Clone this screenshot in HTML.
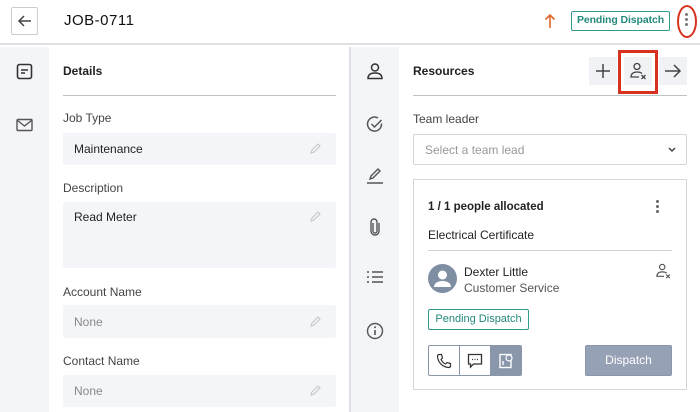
<!DOCTYPE html>
<html><head><meta charset="utf-8"><style>
*{box-sizing:border-box;margin:0;padding:0}
body{width:700px;height:412px;overflow:hidden;background:#fff;font-family:"Liberation Sans",sans-serif;color:#222;position:relative;font-size:12px}
.a{position:absolute}
.lbl{color:#444;font-size:12px}
.box{background:#f4f5f8;border-radius:2px}
.val{position:absolute;left:11px;font-size:12px}
.pen{position:absolute;right:14px}
</style></head><body>
<svg width="0" height="0" style="position:absolute"><defs><symbol id="pen" viewBox="0 0 14 14"><path d="M3 11l1-3 6-6 2 2-6 6z" fill="none" stroke="#c4c6ca" stroke-width="1.1"/></symbol></defs></svg>
<!-- header -->
<div class="a" style="left:0;top:0;width:700px;height:45px;border-bottom:2px solid #dfe0e3"></div>
<div class="a" style="left:11px;top:7px;width:27px;height:28px;border:1px solid #c9ccd2;border-radius:2px"></div>
<svg class="a" style="left:16px;top:13px" width="18" height="16" viewBox="0 0 18 16"><path d="M15 8H3M8 3L3 8l5 5" fill="none" stroke="#444" stroke-width="1.5"/></svg>
<div class="a" style="left:64px;top:12px;font-size:15px;letter-spacing:0.5px;color:#111">JOB-0711</div>
<svg class="a" style="left:544px;top:13px" width="12" height="16" viewBox="0 0 12 16"><path d="M6 15V2M1.5 6.5L6 2l4.5 4.5" fill="none" stroke="#e0672d" stroke-width="1.6"/></svg>
<div class="a" style="left:571px;top:11px;width:99px;height:20px;border:1.5px solid #2e9a8c;border-radius:2px;color:#23897c;font-size:10.5px;font-weight:bold;text-align:center;line-height:17px;white-space:nowrap;letter-spacing:-0.1px">Pending Dispatch</div>
<div class="a" style="left:677px;top:5px;width:20px;height:33px;border:2.5px solid #d8321e;border-radius:50%"></div>
<div class="a" style="left:685px;top:13px;width:3px;height:3px;background:#777;border-radius:50%;box-shadow:0 5px 0 #777,0 10px 0 #777"></div>
<!-- left rail -->
<div class="a" style="left:0;top:47px;width:49px;height:365px;background:#f4f5f8"></div>
<svg class="a" style="left:16px;top:63px" width="17" height="17" viewBox="0 0 17 17"><rect x="1.5" y="1.5" width="14" height="14" rx="2" fill="none" stroke="#333" stroke-width="1.6"/><path d="M5 7h7M5 10h4" stroke="#333" stroke-width="1.4"/></svg>
<svg class="a" style="left:16px;top:118px" width="17" height="14" viewBox="0 0 17 14"><rect x="1" y="1.5" width="15" height="11" rx="1" fill="none" stroke="#555" stroke-width="1.4"/><path d="M1.5 2.5L8.5 8l7-5.5" fill="none" stroke="#555" stroke-width="1.4"/></svg>
<!-- details -->
<div class="a" style="left:63px;top:64px;font-size:12px;font-weight:bold;color:#222">Details</div>
<div class="a" style="left:63px;top:95px;width:273px;height:1px;background:#bfc2c7"></div>
<div class="a lbl" style="left:63px;top:111px">Job Type</div>
<div class="a box" style="left:63px;top:133px;width:273px;height:32px"><span class="val" style="top:9px">Maintenance</span><svg class="pen" style="top:9px" width="14" height="14"><use href="#pen"/></svg></div>
<div class="a lbl" style="left:63px;top:181px">Description</div>
<div class="a box" style="left:63px;top:202px;width:273px;height:66px"><span class="val" style="top:8px">Read Meter</span><svg class="pen" style="top:8px" width="14" height="14"><use href="#pen"/></svg></div>
<div class="a lbl" style="left:63px;top:285px">Account Name</div>
<div class="a box" style="left:63px;top:305px;width:273px;height:33px"><span class="val" style="top:10px;color:#888">None</span><svg class="pen" style="top:10px" width="14" height="14"><use href="#pen"/></svg></div>
<div class="a lbl" style="left:63px;top:354px">Contact Name</div>
<div class="a box" style="left:63px;top:375px;width:273px;height:32px"><span class="val" style="top:9px;color:#888">None</span><svg class="pen" style="top:9px" width="14" height="14"><use href="#pen"/></svg></div>
<!-- divider + right rail -->
<div class="a" style="left:349px;top:47px;width:2px;height:365px;background:#dfe0e3"></div>
<div class="a" style="left:351px;top:47px;width:48px;height:365px;background:#f4f5f8"></div>
<svg class="a" style="left:366px;top:62px" width="18" height="18" viewBox="0 0 18 18"><circle cx="9" cy="5.5" r="3.5" fill="none" stroke="#333" stroke-width="1.5"/><path d="M2 16.5c0-4 3-5.5 7-5.5s7 1.5 7 5.5z" fill="none" stroke="#333" stroke-width="1.5"/></svg>
<svg class="a" style="left:366px;top:115px" width="18" height="18" viewBox="0 0 18 18"><path d="M15.5 8.5A7 7 0 1 1 12 3" fill="none" stroke="#555" stroke-width="1.5"/><path d="M5.5 9l3 3 7-7" fill="none" stroke="#555" stroke-width="1.5"/></svg>
<svg class="a" style="left:366px;top:166px" width="18" height="18" viewBox="0 0 18 18"><path d="M4 13l1-3 7-7 2 2-7 7z" fill="none" stroke="#555" stroke-width="1.4"/><path d="M1 17h16" stroke="#555" stroke-width="1.5"/></svg>
<svg class="a" style="left:369px;top:218px" width="12" height="18" viewBox="0 0 12 18"><path d="M4 5v8a2 2 0 0 0 4 0V4a3 3 0 0 0-6 0v9a4 4 0 0 0 8 0V5" fill="none" stroke="#555" stroke-width="1.4"/></svg>
<svg class="a" style="left:366px;top:270px" width="18" height="14" viewBox="0 0 18 14"><path d="M1 2h2M6 2h11M1 7h2M6 7h11M1 12h2M6 12h11" stroke="#555" stroke-width="1.4"/></svg>
<svg class="a" style="left:366px;top:322px" width="18" height="18" viewBox="0 0 18 18"><circle cx="9" cy="9" r="7.5" fill="none" stroke="#555" stroke-width="1.4"/><path d="M9 8v5" stroke="#555" stroke-width="1.6"/><circle cx="9" cy="5.3" r="1" fill="#555"/></svg>
<!-- resources -->
<div class="a" style="left:413px;top:64px;font-size:12px;font-weight:bold;color:#222">Resources</div>
<div class="a" style="left:589px;top:57px;width:28px;height:28px;background:#f1f2f5"></div>
<svg class="a" style="left:595px;top:63px" width="16" height="16"><path d="M8 1v14M1 8h14" stroke="#444" stroke-width="1.5"/></svg>
<div class="a" style="left:624px;top:57px;width:28px;height:28px;background:#f1f2f5"></div>
<svg class="a" style="left:629px;top:62px" width="20" height="18" viewBox="0 0 20 18"><circle cx="8" cy="4.5" r="3" fill="none" stroke="#444" stroke-width="1.3"/><path d="M13 11.5c-1-1-3-1.5-5-1.5-4 0-6 2-6 5h8" fill="none" stroke="#444" stroke-width="1.3"/><path d="M12.5 13l4 4M16.5 13l-4 4" stroke="#444" stroke-width="1.3"/></svg>
<div class="a" style="left:618px;top:50px;width:40px;height:44px;border:3px solid #d8321e"></div>
<div class="a" style="left:659px;top:57px;width:28px;height:28px;background:#f1f2f5"></div>
<svg class="a" style="left:664px;top:63px" width="18" height="16"><path d="M1 8h15M10 2l6 6-6 6" fill="none" stroke="#444" stroke-width="1.5"/></svg>
<div class="a" style="left:413px;top:95px;width:274px;height:1px;background:#bfc2c7"></div>
<div class="a lbl" style="left:413px;top:112px">Team leader</div>
<div class="a" style="left:413px;top:134px;width:274px;height:31px;border:1px solid #d3d6db;border-radius:2px"><span class="a" style="left:11px;top:8px;color:#999">Select a team lead</span>
<svg class="a" style="right:10px;top:12px" width="8" height="6"><path d="M1 1l3 3 3-3" fill="none" stroke="#444" stroke-width="1.5"/></svg></div>
<!-- card -->
<div class="a" style="left:413px;top:179px;width:274px;height:211px;border:1px solid #d3d6db"></div>
<div class="a" style="left:428px;top:201px;font-weight:bold;font-size:11.5px">1 / 1 people allocated</div>
<div class="a" style="left:656px;top:200px;width:3px;height:3px;background:#666;border-radius:50%;box-shadow:0 5px 0 #666,0 10px 0 #666"></div>
<div class="a" style="left:428px;top:228px;font-size:12px">Electrical Certificate</div>
<div class="a" style="left:428px;top:250px;width:244px;height:1px;background:#cfd2d6"></div>
<div class="a" style="left:428px;top:264px;width:29px;height:29px;border-radius:50%;background:#7f8ea3;overflow:hidden">
<svg width="29" height="29"><circle cx="14.5" cy="11" r="4.5" fill="#fff"/><path d="M6 23c0-4 4-6 8.5-6s8.5 2 8.5 6z" fill="#fff"/></svg></div>
<div class="a" style="left:464px;top:265px;font-size:12px">Dexter Little</div>
<div class="a" style="left:464px;top:281px;font-size:12px;color:#555">Customer Service</div>
<svg class="a" style="left:655px;top:263px" width="18" height="16" viewBox="0 0 20 18"><circle cx="8" cy="4.5" r="3" fill="none" stroke="#555" stroke-width="1.3"/><path d="M13 11.5c-1-1-3-1.5-5-1.5-4 0-6 2-6 5h8" fill="none" stroke="#555" stroke-width="1.3"/><path d="M12.5 13l4 4M16.5 13l-4 4" stroke="#555" stroke-width="1.3"/></svg>
<div class="a" style="left:428px;top:309px;width:101px;height:21px;border:1.5px solid #2e9a8c;border-radius:2px;color:#23897c;font-size:11px;text-align:center;line-height:19px;white-space:nowrap">Pending Dispatch</div>
<div class="a" style="left:428px;top:345px;width:94px;height:31px;border:1px solid #8a96aa;border-radius:2px;overflow:hidden;display:flex">
<div style="width:31px;border-right:1px solid #8a96aa;position:relative"><svg class="a" style="left:7px;top:7px" width="16" height="16" viewBox="0 0 16 16"><path d="M3 1.5l2.5 0 1 3.5-1.5 1.5c1 2 2.5 3.5 4.5 4.5l1.5-1.5 3.5 1v2.5c0 1-1 1.5-2 1.5C6.5 14 2 9.5 1.5 3.5c0-1 .5-2 1.5-2z" fill="none" stroke="#333" stroke-width="1.2"/></svg></div>
<div style="width:31px;border-right:1px solid #8a96aa;position:relative"><svg class="a" style="left:7px;top:7px" width="16" height="16" viewBox="0 0 16 16"><path d="M1.5 1.5h13v9.5h-8l-3 3v-3h-2z" fill="none" stroke="#333" stroke-width="1.3"/><path d="M5 6.5h1M7.5 6.5h1M10 6.5h1" stroke="#333" stroke-width="1.2"/></svg></div>
<div style="flex:1;background:#8a96aa;position:relative"><svg class="a" style="left:7px;top:7px" width="16" height="16" viewBox="0 0 16 16"><rect x="2" y="1.5" width="11" height="13" fill="none" stroke="#fff" stroke-width="1.4"/><path d="M5 8v4" stroke="#fff" stroke-width="1.4"/><circle cx="11" cy="5" r="3" fill="#8a96aa" stroke="#fff" stroke-width="1.2"/></svg></div>
</div>
<div class="a" style="left:585px;top:345px;width:87px;height:31px;background:#97a1b5;border:1px solid #8a96aa;border-radius:2px;color:#fff;font-size:12px;text-align:center;line-height:29px">Dispatch</div>
</body></html>
